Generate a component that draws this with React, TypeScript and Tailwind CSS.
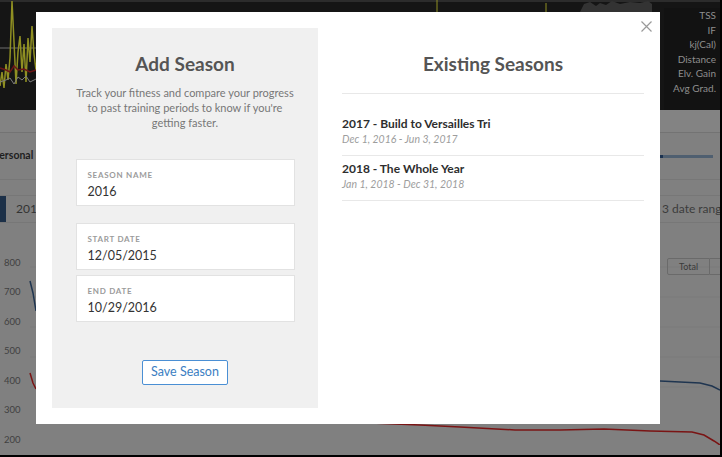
const yLabels = ['800', '700', '600', '500', '400', '300', '200'];
const headerLabels = ['TSS', 'IF', 'kj(Cal)', 'Distance', 'Elv. Gain', 'Avg Grad.'];

const seasons = [
  { name: '2017 - Build to Versailles Tri', range: 'Dec 1, 2016 - Jun 3, 2017' },
  { name: '2018 - The Whole Year', range: 'Jan 1, 2018 - Dec 31, 2018' },
];

const Field = ({ label, value }: { label: string; value: string }) => (
  <div className="w-[219px] h-[47px] bg-white border border-[#e2e2e2] px-[11px] pt-[10px]">
    <div className="text-[8px] leading-[10px] font-bold tracking-[0.09em] text-[#9b9b9b] uppercase">{label}</div>
    <div className="mt-[4px] text-[12.5px] leading-[15px] text-[#333]">{value}</div>
  </div>
);

const HeaderChart = () => (
  <svg className="absolute inset-0" width="722" height="112" viewBox="0 0 722 112">
    <rect x="0" y="0" width="722" height="2" fill="#2c2c2c" />
    <line x1="0" y1="48" x2="40" y2="48" stroke="#6e6e6e" strokeWidth="1" />
    <polyline
      points="0,86 2,72 4,88 6,64 8,80 10,58 12,1 14,42 16,84 18,52 20,36 22,72 24,44 26,82 28,38 30,62 32,26 34,54 36,70 38,50"
      fill="none"
      stroke="#8f8f22"
      strokeWidth="1.5"
    />
    <polyline points="0,68 6,70 10,72 14,66 18,70 24,69 30,72 36,70" fill="none" stroke="#6b1616" strokeWidth="1.5" />
    <polyline points="0,82 6,80 10,78 14,84 18,77 22,80 26,76 30,82 36,79" fill="none" stroke="#7c7c7c" strokeWidth="1" />
    <line x1="437" y1="0" x2="437" y2="12" stroke="#8f8f22" strokeWidth="1" />
    <line x1="546" y1="3" x2="546" y2="12" stroke="#8f8f22" strokeWidth="1" />
    <polygon points="580,12 584,4 590,2 596,6 600,3 606,5 612,1 620,4 630,2 640,3 648,1 652,4 652,12" fill="#333" />
  </svg>
);

const BodyChart = () => (
  <svg className="absolute inset-0" width="720" height="222" viewBox="0 0 720 222">
    {[44, 74, 104, 134, 164].map((y) => (
      <line key={y} x1="30" y1={y} x2="720" y2={y} stroke="#7a7a7a" strokeWidth="1" />
    ))}
    <polyline points="30,58 33,70 36,88" fill="none" stroke="#1f3550" strokeWidth="1.5" />
    <polyline points="30,150 33,160 36,166" fill="none" stroke="#7a1414" strokeWidth="1.5" />
    <polyline points="660,158 680,159 700,160 712,163 720,167" fill="none" stroke="#1f3550" strokeWidth="1.5" />
    <polyline
      points="36,190 150,191 206,194 260,195 300,196 339,197 370,200 420,202 460,204 515,207 560,207 604,206 650,208 692,209 704,212 714,218 720,222"
      fill="none"
      stroke="#7a1414"
      strokeWidth="1.5"
    />
  </svg>
);

export default function App() {
  return (
    <div className="relative w-[722px] h-[457px] overflow-hidden bg-black font-['Lato',sans-serif]">
      <div className="w-[720px] h-[455px] overflow-hidden bg-[#808080] flex flex-col">
        {/* dimmed page behind the dialog */}
        <div className="relative h-[112px] bg-[#151515] flex">
          <HeaderChart />
          <div className="relative ml-auto mt-[8px] w-[56px] h-[102px] bg-[#121212] flex flex-col items-end pr-[4px] text-[10px] leading-[14.5px] text-[#8e8e8e]">
            {headerLabels.map((l) => (
              <span key={l} className="whitespace-nowrap">{l}</span>
            ))}
          </div>
        </div>

        <div className="h-[25px] bg-[#838383] border-b border-[#737373]" />

        <div className="h-[50px] flex items-center justify-between border-b border-[#777]">
          <span className="-ml-[7px] text-[10.5px] font-bold text-[#1e1e1e] whitespace-nowrap">Personal Records</span>
          <div className="w-[60px] flex items-center">
            <div className="w-[3px] h-[3px] bg-[#1b3250]" />
            <div className="w-[50px] h-[3px] bg-[#4f5f70]" />
          </div>
        </div>

        <div className="h-[16px]" />

        <div className="h-[30px] flex items-stretch justify-between border-y border-[#777]">
          <div className="flex items-center">
            <div className="w-[6px] h-full bg-[#1c3048]" />
            <span className="ml-[10px] text-[12px] text-[#333]">2018</span>
          </div>
          <div className="w-[58px] flex items-center">
            <span className="text-[12px] text-[#3c3c3c] whitespace-nowrap">3 date ranges</span>
          </div>
        </div>

        <div className="relative flex-1 flex justify-between">
          <BodyChart />
          <div className="relative pt-[25px] pl-[4px] flex flex-col text-[9.5px] text-[#404040]">
            {yLabels.map((l) => (
              <div key={l} className="h-[29.6px] flex items-center">{l}</div>
            ))}
          </div>
          <div className="relative w-[53px] pt-[35px] flex">
            <div className="w-[43px] h-[17px] border border-[#6a6a6a] rounded-l-[2px] flex items-center justify-center text-[9px] text-[#3a3a3a]">
              Total
            </div>
            <div className="w-[10px] h-[17px] border-y border-[#6a6a6a]" />
          </div>
        </div>
      </div>

      {/* dialog */}
      <div className="absolute left-[36px] top-[12px] w-[624px] h-[412px] bg-white p-4 flex">
        <button className="absolute top-[9px] right-[8px] w-[11px] h-[11px]">
          <svg width="11" height="11" viewBox="0 0 11 11">
            <path d="M0.5 0.5 L10.5 10.5 M10.5 0.5 L0.5 10.5" stroke="#9a9a9a" strokeWidth="1.2" fill="none" />
          </svg>
        </button>

        <div className="w-[266px] h-full bg-[#f0f0f0] flex flex-col items-center pt-[24px]">
          <h2 className="text-[19px] leading-[24px] font-bold text-[#555]">Add Season</h2>
          <p className="mt-[9px] text-center text-[11px] leading-[15px] text-[#777] whitespace-nowrap">
            Track your fitness and compare your progress
            <br />
            to past training periods to know if you're
            <br />
            getting faster.
          </p>
          <div className="mt-[29px]">
            <Field label="Season Name" value="2016" />
          </div>
          <div className="mt-[17px] flex flex-col gap-[5px]">
            <Field label="Start Date" value="12/05/2015" />
            <Field label="End Date" value="10/29/2016" />
          </div>
          <button className="mt-auto mb-[23px] w-[86px] h-[25px] bg-white border border-[#4a8fd4] rounded-[2px] text-[12.5px] text-[#3b7ec2]">
            Save Season
          </button>
        </div>

        <div className="flex-1 pl-6 flex flex-col">
          <div className="h-[66px] border-b border-[#e8e8e8] pt-[24px] text-center">
            <h2 className="text-[19px] leading-[24px] font-bold text-[#555]">Existing Seasons</h2>
          </div>
          <div className="mt-[17px]">
            {seasons.map((s) => (
              <div key={s.name} className="h-[45px] border-b border-[#e8e8e8] pt-[6px]">
                <div className="text-[12px] leading-[14px] font-bold text-[#2e2e2e]">{s.name}</div>
                <div className="text-[10.5px] leading-[16px] italic text-[#9d9d9d]">{s.range}</div>
              </div>
            ))}
          </div>
        </div>
      </div>
    </div>
  );
}
